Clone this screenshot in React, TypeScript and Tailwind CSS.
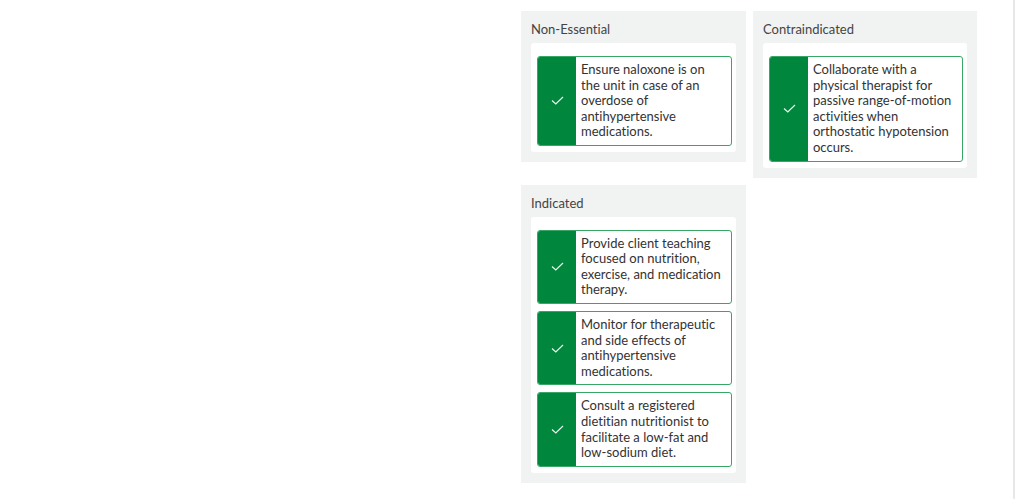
import React from "react";

type Group = { title: string; items: string[] };

const groups: Group[] = [
  {
    title: "Non-Essential",
    items: ["Ensure naloxone is on the unit in case of an overdose of antihypertensive medications."],
  },
  {
    title: "Contraindicated",
    items: [
      "Collaborate with a physical therapist for passive range-of-motion activities when orthostatic hypotension occurs.",
    ],
  },
  {
    title: "Indicated",
    items: [
      "Provide client teaching focused on nutrition, exercise, and medication therapy.",
      "Monitor for therapeutic and side effects of antihypertensive medications.",
      "Consult a registered dietitian nutritionist to facilitate a low-fat and low-sodium diet.",
    ],
  },
];

function Check() {
  return (
    <svg width="13" height="9" viewBox="0 0 13 9" fill="none">
      <polyline points="1,4.5 4.8,8 12,1" stroke="#e6f5eb" strokeWidth="1.2" />
    </svg>
  );
}

function Card({ text }: { text: string }) {
  return (
    <div className="flex rounded-[3px] border border-[#38a766] bg-white overflow-hidden">
      <div className="w-[38px] shrink-0 bg-[#00873d] flex items-center justify-center">
        <Check />
      </div>
      <div className="flex-1 px-[5px] py-[5px] text-[13px] leading-[15.6px] text-[#333]">{text}</div>
    </div>
  );
}

function Panel({ group }: { group: Group }) {
  return (
    <div className="bg-[#f1f2f2] px-[10px] pt-[7px] pb-[10px]">
      <div className="text-[13px] leading-[22px] text-[#444]">{group.title}</div>
      <div className="mt-[3px] bg-white rounded-[3px] pt-[13px] pb-[6px] pl-[6px] pr-[4px] flex flex-col gap-[7px]">
        {group.items.map((t) => (
          <Card key={t} text={t} />
        ))}
      </div>
    </div>
  );
}

export default function App() {
  return (
    <div className="flex h-[499px] w-full bg-white font-['Lato','Open_Sans',sans-serif] [font-variant-ligatures:none] [font-feature-settings:'liga'_0]">
      <div className="w-[521px] shrink-0" />
      <div className="w-[492px] shrink-0 pt-[11px]">
        <div className="grid grid-cols-[225px_224px] gap-[7px] items-start">
          {groups.map((g) => (
            <Panel key={g.title} group={g} />
          ))}
        </div>
      </div>
      <div className="w-[2px] bg-[#e8e8e8]" />
      <div className="flex-1" />
    </div>
  );
}
